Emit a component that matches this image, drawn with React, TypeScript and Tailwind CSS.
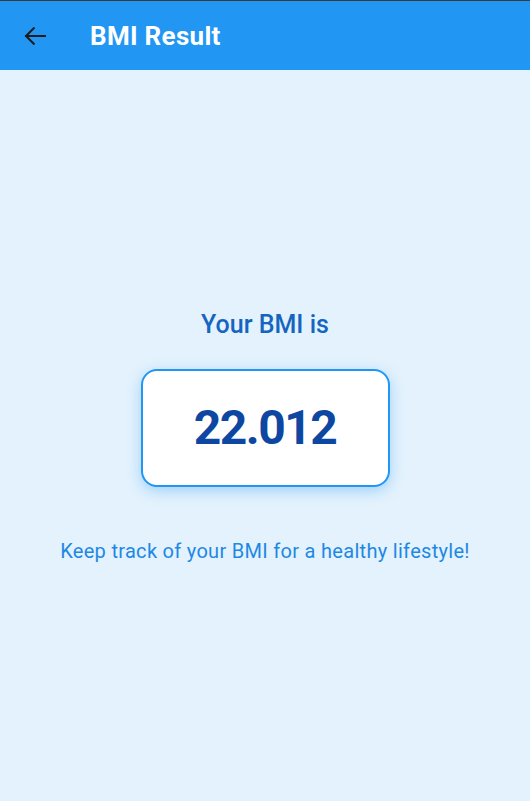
import React from 'react';

const BackArrow: React.FC = () => (
  <svg width="22" height="20" viewBox="0 0 22 20" fill="none" stroke="#1c1c1c" strokeWidth="2" strokeLinecap="square">
    <path d="M2 10H21" />
    <path d="M10.5 1.5L2 10l8.5 8.5" strokeLinecap="butt" />
  </svg>
);

export default function App() {
  return (
    <div
      className="w-[530px] h-[801px] flex flex-col bg-[#e3f2fd] overflow-hidden"
      style={{ fontFamily: 'Roboto, "Liberation Sans", sans-serif' }}
    >
      <div className="h-px bg-[#3a3a3a]" />
      <header className="h-[69px] bg-[#2196f3] flex items-center pl-[24px]">
        <button className="w-[22px] h-5 flex items-center justify-center">
          <BackArrow />
        </button>
        <h1 className="ml-[44px] text-white text-[26px] font-bold leading-none tracking-[0.3px]">BMI Result</h1>
      </header>

      <main className="flex-1 flex flex-col items-center justify-center pt-[3px]">
        <p className="text-[#1565c0] text-[25px] font-medium leading-[28px]">Your BMI is</p>
        <div className="mt-[30px] w-[249px] h-[118px] rounded-[16px] border-2 border-[#2196f3] bg-white flex items-center justify-center shadow-[0_4px_14px_rgba(33,150,243,0.35)]">
          <span className="text-[#0d47a1] text-[48px] font-bold leading-none tracking-[-1.5px]">22.012</span>
        </div>
        <p className="mt-[53px] text-[#1e88e5] text-[20px] leading-[23px] tracking-[0.3px]">Keep track of your BMI for a healthy lifestyle!</p>
      </main>
    </div>
  );
}
